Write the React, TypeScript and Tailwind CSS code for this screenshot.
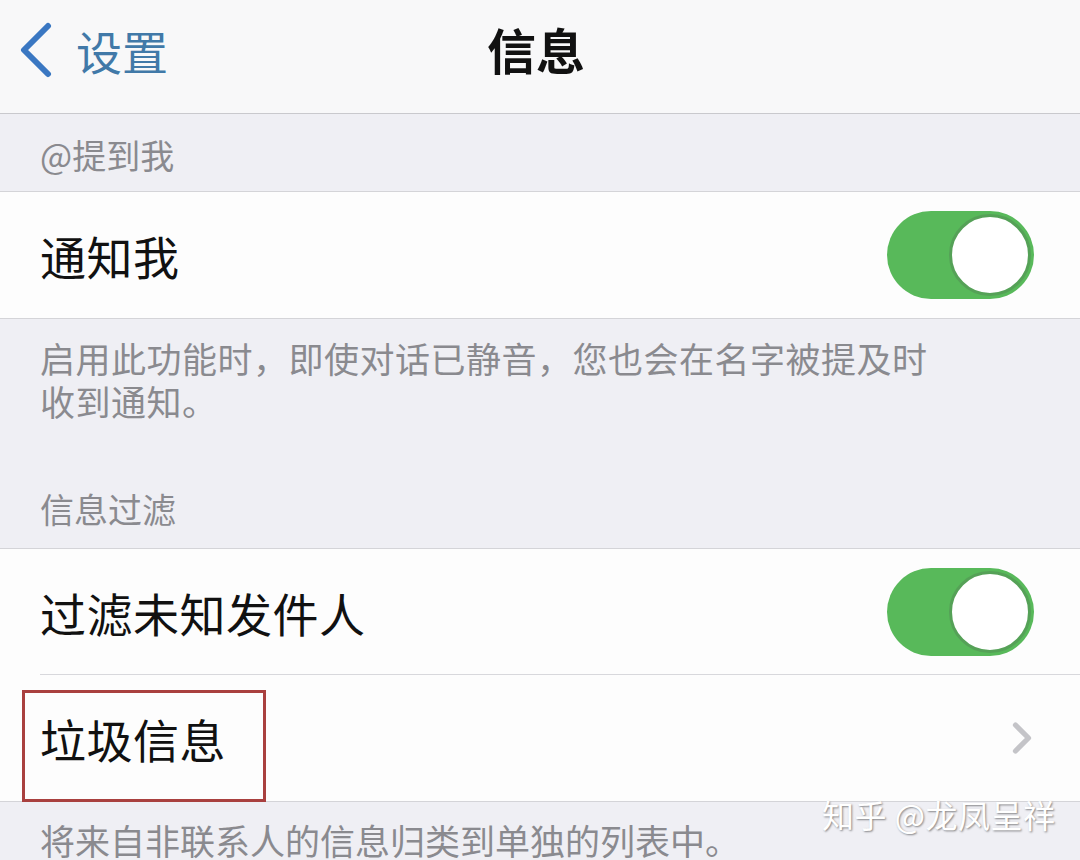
import { ChevronRight } from "lucide-react";

const font = { fontFamily: '"Noto Sans CJK SC", "Noto Sans", sans-serif' };

const Toggle = () => (
  <div className="w-[147px] h-[88px] rounded-full bg-[#58b95a] p-[3px] flex justify-end items-center">
    <div className="w-[82px] h-[82px] rounded-full bg-white border-[3px] border-[#55a157]" />
  </div>
);

const Row = ({ label, right, inset = false }: { label: string; right: React.ReactNode; inset?: boolean }) => (
  <div className="relative h-[126px] bg-[#fdfdfd] flex items-center justify-between pl-[40px] pr-[46px]">
    <span className="text-[46px] leading-none text-[#111] tracking-[0.5px]">{label}</span>
    {right}
    {inset && <div className="absolute bottom-0 left-[40px] right-0 h-px bg-[#d8d8dc]" />}
  </div>
);

export default function App() {
  return (
    <div className="relative w-[1080px] h-[860px] overflow-hidden bg-[#efeff4]" style={font}>
      <header className="h-[114px] bg-[#f8f8f9] border-b border-[#c9c9cd] grid grid-cols-[1fr_auto_1fr] items-center">
        <div className="flex items-center pl-[18px] -mt-[14px]">
          <svg width="36" height="56" viewBox="0 0 36 56" fill="none">
            <path d="M30 4 L6 28 L30 52" stroke="#3a77c2" strokeWidth="6" strokeLinecap="round" strokeLinejoin="round" />
          </svg>
          <span className="ml-[22px] text-[46px] leading-none text-[#4179a8]">设置</span>
        </div>
        <h1 className="text-[49px] leading-none font-bold text-[#111] -mt-[16px] -ml-[8px]">信息</h1>
        <div />
      </header>

      <div className="h-[78px] flex items-center pl-[40px] pt-[4px] border-b border-[#d4d4d8]">
        <span className="text-[34px] leading-none text-[#8a8a8f]">@提到我</span>
      </div>

      <div className="border-b border-[#d4d4d8]">
        <Row label="通知我" right={<Toggle />} />
      </div>

      <div className="h-[230px] pl-[40px] pr-[40px] flex flex-col border-b border-[#d4d4d8]">
        <p className="pt-[17px] text-[35px] leading-[43px] tracking-[0.5px] text-[#8a8a8f] w-[920px]">
          启用此功能时，即使对话已静音，您也会在名字被提及时收到通知。
        </p>
        <span className="mt-auto mb-[22px] text-[34px] leading-none text-[#8a8a8f]">信息过滤</span>
      </div>

      <Row label="过滤未知发件人" right={<Toggle />} inset />

      <div className="relative border-b border-[#d4d4d8]">
        <Row label="垃圾信息" right={<ChevronRight className="w-[52px] h-[52px] text-[#c4c4c8] -mr-[14px]" strokeWidth={2.4} />} />
        <div className="absolute left-[22px] top-[15px] w-[244px] h-[112px] border-[3px] border-[#a9403f]" />
      </div>

      <p className="pl-[40px] pt-[20px] text-[35px] leading-none text-[#8a8a8f]">
        将来自非联系人的信息归类到单独的列表中。
      </p>

      <div className="absolute left-[822px] top-[798px] text-[32px] leading-none text-white tracking-[0.5px] [text-shadow:1px_1px_2px_rgba(0,0,0,0.45)]">
        知乎 @龙凤呈祥
      </div>
    </div>
  );
}
